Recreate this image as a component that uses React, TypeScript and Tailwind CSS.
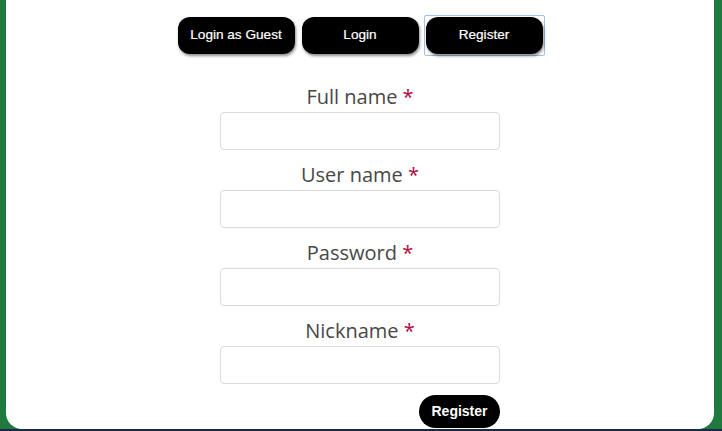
import { useState } from "react";

const fields = ["Full name", "User name", "Password", "Nickname"];

function TabButton({ label, active, onClick }: { label: string; active?: boolean; onClick: () => void }) {
  return (
    <div className={`rounded-[2px] border p-px ${active ? "border-[#a3c0e6]" : "border-transparent"}`}>
      <button
        onClick={onClick}
        className="flex h-[37px] w-[117px] items-center justify-center rounded-[12px] bg-black text-[13.6px] text-white shadow-[1px_2px_3px_rgba(0,0,0,0.45)] [font-family:'Liberation_Sans',Arial,sans-serif] [-webkit-text-stroke:0.2px_white]"
      >
        {label}
      </button>
    </div>
  );
}

export default function App() {
  const [tab, setTab] = useState("Register");

  return (
    <div className="flex h-[431px] w-[722px] flex-col bg-[#1f7a40]">
      <div className="ml-[6px] mr-[8px] flex flex-1 flex-col items-center rounded-b-[16px] bg-white pt-[15px]">
        <div className="flex gap-[3px]">
          {["Login as Guest", "Login", "Register"].map((t) => (
            <TabButton key={t} label={t} active={tab === t} onClick={() => setTab(t)} />
          ))}
        </div>

        <form className="mt-[27px] flex w-[280px] flex-col" onSubmit={(e) => e.preventDefault()}>
          {fields.map((f, i) => (
            <div key={f} className={`flex flex-col ${i > 0 ? "mt-[11px]" : ""}`}>
              <label className="h-[28px] text-center text-[20px] leading-[28px] text-[#474747] [font-family:'Open_Sans',sans-serif]">
                {f} <span className="text-[#b1063f]">*</span>
              </label>
              <input
                type={f === "Password" ? "password" : "text"}
                className="mt-px h-[38px] w-full rounded-[4px] border border-[#dcdcdc] bg-white px-2 outline-none"
              />
            </div>
          ))}
          <div className="mt-[11px] flex justify-end">
            <button
              type="submit"
              className="h-[33px] w-[81px] rounded-full bg-black text-[14px] font-bold text-white [font-family:'Liberation_Sans',Arial,sans-serif]"
            >
              Register
            </button>
          </div>
        </form>
      </div>
      <div className="h-[2px] bg-[#1b2a44]" />
    </div>
  );
}
